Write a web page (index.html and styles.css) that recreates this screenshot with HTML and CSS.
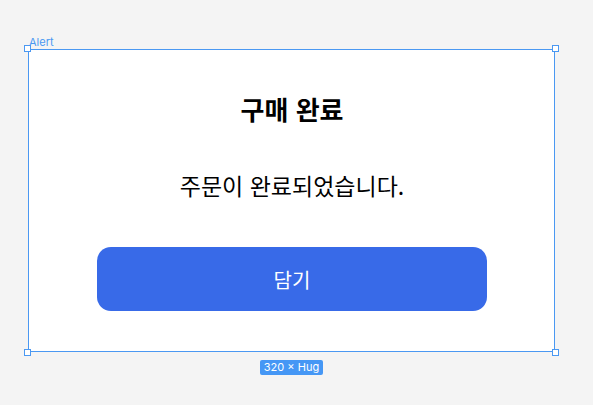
FILE: index.html
```html
<!DOCTYPE html>
<html lang="ko">
<head>
    <meta charset="UTF-8">
    <meta name="viewport" content="width=device-width, initial-scale=1.0">
    <title>Alert</title>
    <link rel="stylesheet" href="styles.css">
</head>
<body>
    <div class="canvas">
        <div class="frame">
            <span class="frame-label">Alert</span>
            <span class="handle handle-tl"></span>
            <span class="handle handle-tr"></span>
            <span class="handle handle-bl"></span>
            <span class="handle handle-br"></span>

            <div class="alert">
                <h1 class="alert-title">구매 완료</h1>
                <p class="alert-message">주문이 완료되었습니다.</p>
                <button type="button" class="alert-button">담기</button>
            </div>
        </div>
        <div class="size-badge">320 × Hug</div>
    </div>
</body>
</html>
```

FILE: styles.css
```css
body {
    margin: 0;
    background-color: #f4f4f4;
    font-family: "Noto Sans CJK KR", "Noto Sans", sans-serif;
}
.canvas {
    padding: 49px 0 0 28px;
    width: 527px;
    display: flex;
    flex-direction: column;
    align-items: center;
}
.frame {
    position: relative;
    width: 527px;
    box-sizing: border-box;
    border: 1px solid #4a98f2;
    background-color: #fff;
}
.frame-label {
    position: absolute;
    left: 0;
    top: -15px;
    font-family: Inter, "Liberation Sans", sans-serif;
    font-size: 11px;
    color: #4a98f2;
}
.handle {
    position: absolute;
    width: 5px;
    height: 5px;
    border: 1.5px solid #4a98f2;
    background-color: #fff;
}
.handle-tl { left: -5px; top: -5px; }
.handle-tr { right: -5px; top: -5px; }
.handle-bl { left: -5px; bottom: -5px; }
.handle-br { right: -5px; bottom: -5px; }
.alert {
    display: flex;
    flex-direction: column;
    align-items: center;
    padding: 40px 67px 40px 68px;
}
.alert-title {
    margin: 0;
    font-size: 26px;
    font-weight: bold;
    line-height: 38px;
    color: #000;
}
.alert-message {
    margin: 40px 0 0;
    font-size: 23px;
    line-height: 34px;
    color: #000;
}
.alert-button {
    margin-top: 45px;
    width: 100%;
    height: 64px;
    border: none;
    border-radius: 14px;
    background-color: #386ae8;
    color: #fff;
    font-family: inherit;
    font-size: 20px;
}
.size-badge {
    margin-top: 8px;
    padding: 0 4px;
    height: 15px;
    line-height: 15px;
    border-radius: 2px;
    background-color: #4597f5;
    color: #fff;
    font-family: Inter, "Liberation Sans", sans-serif;
    font-size: 11px;
}
```
